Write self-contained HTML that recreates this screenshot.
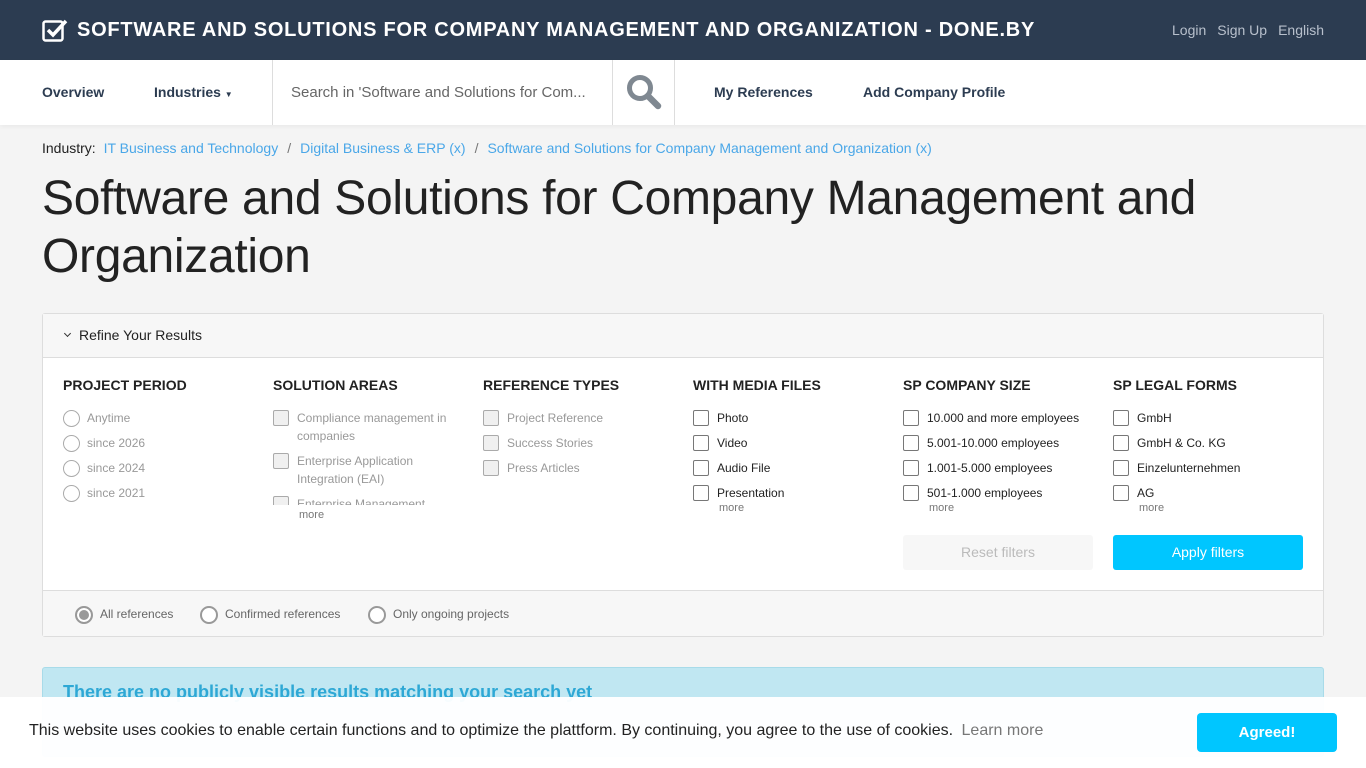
<!DOCTYPE html>
<html><head><meta charset="utf-8"><style>
*{box-sizing:border-box;margin:0;padding:0}
body{width:1366px;height:768px;overflow:hidden;background:#f4f4f4;font-family:"Liberation Sans",sans-serif;color:#222;position:relative}
.top{height:60px;background:#2c3c51;position:relative}
.top .brand{position:absolute;left:42px;top:18px;color:#fff;font-weight:bold;font-size:20px;letter-spacing:.75px;display:flex;align-items:center}
.top .brand svg{margin-right:9px}
.top .links{position:absolute;right:42px;top:22px;font-size:14px;color:#b8c0cc}
.top .links span{margin-left:11px}
.nav{height:65px;background:#fff;position:relative;box-shadow:0 2px 4px rgba(0,0,0,.04)}
.nav .it{position:absolute;top:24px;font-size:14px;color:#2c3c51;font-weight:bold}
.nav .search{position:absolute;left:272px;top:0;width:403px;height:65px;border-left:1px solid #ddd;border-right:1px solid #ddd}
.nav .search .ph{position:absolute;left:18px;top:24px;font-size:15px;color:#666}
.nav .search .btn{position:absolute;left:339px;top:0;width:63px;height:65px;border-left:1px solid #ddd}
.bc{position:absolute;top:140px;left:42px;font-size:14px;color:#222}
.bc a{color:#4aa7e8;text-decoration:none}
.bc .s{color:#777;margin:0 9px}
h1{position:absolute;top:170px;left:42px;font-weight:300;font-size:48px;line-height:58px;color:#222;width:1250px;font-family:"Liberation Sans",sans-serif;letter-spacing:-.3px}
.panel{position:absolute;left:42px;top:313px;width:1282px;height:324px;border:1px solid #ddd;background:#fff;border-radius:3px}
.ph1{height:44px;background:#f7f7f7;border-bottom:1px solid #ddd;font-size:14px;padding:13px 0 0 36px;position:relative}
.ph1:before{content:"";position:absolute;left:22px;top:17px;width:4px;height:4px;border-right:1.5px solid #333;border-bottom:1.5px solid #333;transform:rotate(45deg)}
.col{position:absolute;top:63px;width:200px}
.col h4{font-size:14px;font-weight:bold;color:#222;margin-bottom:16px}
.opt{font-size:12px;color:#999;position:relative;padding-left:24px;line-height:18px;margin-bottom:7px}
.opt.d{color:#222}
.opt:before{content:"";position:absolute;left:0;top:1px;width:14px;height:14px;border:1.5px solid #aaa;border-radius:2px;background:#f0f0f0}
.opt.d:before{border-color:#777;background:#fff}
.opt.r:before{border-radius:50%;background:#fff;width:15px;height:15px}
.more{font-size:11px;color:#777;padding-left:26px;margin-top:-7px}
.reset{position:absolute;left:860px;top:221px;width:190px;height:35px;background:#f7f7f7;color:#bbb;font-size:14px;text-align:center;line-height:35px;border-radius:3px}
.apply{position:absolute;left:1070px;top:221px;width:190px;height:35px;background:#00c6ff;color:#fff;font-size:14px;text-align:center;line-height:35px;border-radius:3px}
.pf{position:absolute;left:0;bottom:0;width:100%;height:46px;background:#f7f7f7;border-top:1px solid #ddd;font-size:12px;color:#666}
.pf span{position:absolute;top:16px;padding-left:25px}
.pf span:before{content:"";position:absolute;left:0;top:-1px;width:14px;height:14px;border:2px solid #999;border-radius:50%;background:#fff}
.pf span.on:before{background:#999;box-shadow:inset 0 0 0 2px #fff}
.alert{position:absolute;left:42px;top:667px;width:1282px;height:90px;background:#c0e7f2;border:1px solid #a8dbe9;border-radius:3px}
.alert div{position:absolute;left:20px;top:14px;font-size:18px;color:#2ea8d5;font-weight:bold}
.cookie{position:absolute;left:0;top:697px;width:1366px;height:71px;background:rgba(255,255,255,.96)}
.cookie .t{position:absolute;left:29px;top:25px;font-size:16px;color:#222}
.cookie .t a{color:#777;margin-left:4px}
.cookie .ag{position:absolute;left:1197px;top:16px;width:140px;height:39px;background:#00c6ff;color:#fff;font-weight:bold;font-size:15px;text-align:center;line-height:39px;border-radius:4px}
</style></head><body>
<div class="top">
<div class="brand"><svg width="26" height="24" viewBox="0 0 26 24"><rect x="1.5" y="3.5" width="19" height="19" rx="2" fill="none" stroke="#fff" stroke-width="2.5"/><path d="M6 12l5 5L24 3" fill="none" stroke="#fff" stroke-width="3.5"/></svg>SOFTWARE AND SOLUTIONS FOR COMPANY MANAGEMENT AND ORGANIZATION - DONE.BY</div>
<div class="links"><span>Login</span><span>Sign Up</span><span>English</span></div>
</div>
<div class="nav">
<div class="it" style="left:42px">Overview</div>
<div class="it" style="left:154px">Industries <span style="font-size:8px">▼</span></div>
<div class="search"><div class="ph">Search in 'Software and Solutions for Com...</div>
<div class="btn"><svg style="position:absolute;left:13px;top:14px" width="36" height="36" viewBox="0 0 36 36"><circle cx="14" cy="14" r="10.5" fill="none" stroke="#7f8891" stroke-width="5"/><path d="M22 22l10 10" stroke="#7f8891" stroke-width="6.5" stroke-linecap="round"/></svg></div></div>
<div class="it" style="left:714px">My References</div>
<div class="it" style="left:863px">Add Company Profile</div>
</div>
<div class="bc">Industry: <a style="margin-left:4px">IT Business and Technology</a><span class="s">/</span><a>Digital Business &amp; ERP (x)</a><span class="s">/</span><a>Software and Solutions for Company Management and Organization (x)</a></div>
<h1>Software and Solutions for Company Management and Organization</h1>
<div class="panel">
<div class="ph1">Refine Your Results</div>
<div class="col" style="left:20px"><h4>PROJECT PERIOD</h4>
<div class="opt r">Anytime</div><div class="opt r">since 2026</div><div class="opt r">since 2024</div><div class="opt r">since 2021</div></div>
<div class="col" style="left:230px;height:128px;overflow:hidden"><h4>SOLUTION AREAS</h4>
<div class="opt">Compliance management in companies</div><div class="opt">Enterprise Application Integration (EAI)</div><div class="opt">Enterprise Management</div></div>
<div class="more" style="position:absolute;left:230px;top:195px;margin:0">more</div>
<div class="col" style="left:440px"><h4>REFERENCE TYPES</h4>
<div class="opt">Project Reference</div><div class="opt">Success Stories</div><div class="opt">Press Articles</div></div>
<div class="col" style="left:650px"><h4>WITH MEDIA FILES</h4>
<div class="opt d">Photo</div><div class="opt d">Video</div><div class="opt d">Audio File</div><div class="opt d">Presentation</div><div class="more">more</div></div>
<div class="col" style="left:860px"><h4>SP COMPANY SIZE</h4>
<div class="opt d">10.000 and more employees</div><div class="opt d">5.001-10.000 employees</div><div class="opt d">1.001-5.000 employees</div><div class="opt d">501-1.000 employees</div><div class="more">more</div></div>
<div class="col" style="left:1070px"><h4>SP LEGAL FORMS</h4>
<div class="opt d">GmbH</div><div class="opt d">GmbH &amp; Co. KG</div><div class="opt d">Einzelunternehmen</div><div class="opt d">AG</div><div class="more">more</div></div>
<div class="reset">Reset filters</div><div class="apply">Apply filters</div>
<div class="pf"><span class="on" style="left:32px">All references</span><span style="left:157px">Confirmed references</span><span style="left:325px">Only ongoing projects</span></div>
</div>
<div class="alert"><div>There are no publicly visible results matching your search yet</div></div>
<div class="cookie"><div class="t">This website uses cookies to enable certain functions and to optimize the plattform. By continuing, you agree to the use of cookies. <a>Learn more</a></div><div class="ag">Agreed!</div></div>
</body></html>
